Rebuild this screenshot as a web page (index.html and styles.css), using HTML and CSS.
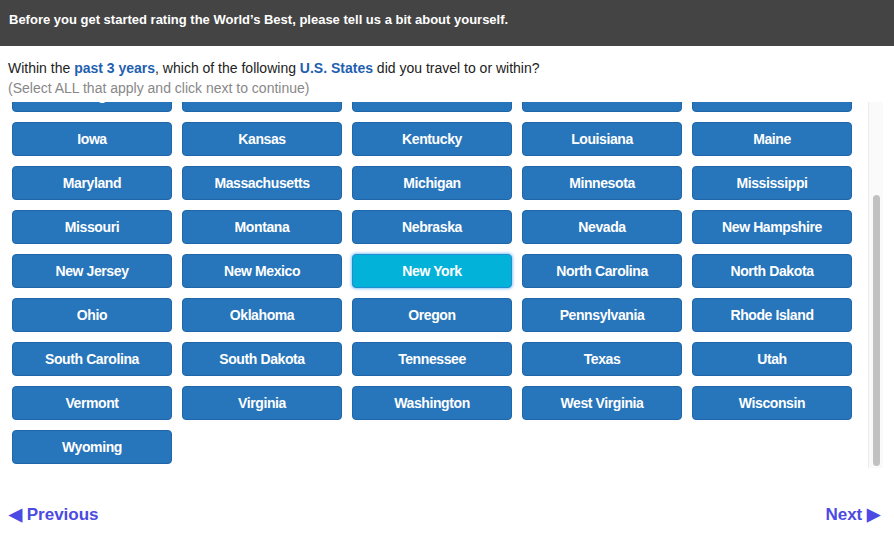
FILE: index.html
```html
<!DOCTYPE html>
<html lang="en">
<head>
    <meta charset="UTF-8">
    <meta name="viewport" content="width=device-width, initial-scale=1.0">
    <title>World's Best Survey</title>
    <link rel="stylesheet" href="styles.css">
</head>
<body>
    <div class="intro-bar">Before you get started rating the World’s Best, please tell us a bit about yourself.</div>

    <div class="question">
        <p class="question-text">Within the <b>past 3 years</b>, which of the following <b>U.S. States</b> did you travel to or within?</p>
        <p class="question-hint">(Select ALL that apply and click next to continue)</p>
    </div>

    <div class="choices-wrap">
        <div class="choices" id="choices">
            <div class="choice-grid">
                <button class="choice">Alabama</button>
                <button class="choice">Alaska</button>
                <button class="choice">Arizona</button>
                <button class="choice">Arkansas</button>
                <button class="choice">California</button>
                <button class="choice">Colorado</button>
                <button class="choice">Connecticut</button>
                <button class="choice">Delaware</button>
                <button class="choice">District of Columbia</button>
                <button class="choice">Florida</button>
                <button class="choice">Georgia</button>
                <button class="choice">Hawaii</button>
                <button class="choice">Idaho</button>
                <button class="choice">Illinois</button>
                <button class="choice">Indiana</button>
                <button class="choice">Iowa</button>
                <button class="choice">Kansas</button>
                <button class="choice">Kentucky</button>
                <button class="choice">Louisiana</button>
                <button class="choice">Maine</button>
                <button class="choice">Maryland</button>
                <button class="choice">Massachusetts</button>
                <button class="choice">Michigan</button>
                <button class="choice">Minnesota</button>
                <button class="choice">Mississippi</button>
                <button class="choice">Missouri</button>
                <button class="choice">Montana</button>
                <button class="choice">Nebraska</button>
                <button class="choice">Nevada</button>
                <button class="choice">New Hampshire</button>
                <button class="choice">New Jersey</button>
                <button class="choice">New Mexico</button>
                <button class="choice selected">New York</button>
                <button class="choice">North Carolina</button>
                <button class="choice">North Dakota</button>
                <button class="choice">Ohio</button>
                <button class="choice">Oklahoma</button>
                <button class="choice">Oregon</button>
                <button class="choice">Pennsylvania</button>
                <button class="choice">Rhode Island</button>
                <button class="choice">South Carolina</button>
                <button class="choice">South Dakota</button>
                <button class="choice">Tennessee</button>
                <button class="choice">Texas</button>
                <button class="choice">Utah</button>
                <button class="choice">Vermont</button>
                <button class="choice">Virginia</button>
                <button class="choice">Washington</button>
                <button class="choice">West Virginia</button>
                <button class="choice">Wisconsin</button>
                <button class="choice">Wyoming</button>
            </div>
        </div>
        <div class="scroll-track">
            <div class="scroll-thumb"></div>
        </div>
    </div>

    <div class="nav">
        <a href="#" class="nav-link">&#9664; Previous</a>
        <a href="#" class="nav-link">Next &#9654;</a>
    </div>

    <script>
        var choices = document.getElementById("choices");
        choices.scrollTop = choices.scrollHeight;
    </script>
</body>
</html>
```

FILE: styles.css
```css
body {
    font-family: "Liberation Sans", Arial, sans-serif;
    margin: 0;
    background-color: #fff;
    color: #222;
}

.intro-bar {
    background-color: #444;
    color: #fff;
    font-size: 13px;
    font-weight: bold;
    height: 46px;
    line-height: 40px;
    padding: 0 9px;
}

.question {
    padding: 12px 8px 0;
    font-size: 14px;
}

.question p {
    margin: 0;
    line-height: 20px;
}

.question-text b {
    color: #1f5fb0;
}

.question-hint {
    color: #888;
}

.choices-wrap {
    display: flex;
    height: 366px;
    margin: 4px 11px 0 0;
}

.choices {
    flex: 1;
    overflow: hidden;
}

.scroll-track {
    width: 14px;
    background-color: #fafafa;
    border-left: 1px solid #ececec;
}

.scroll-thumb {
    height: 271px;
    margin: 93px 3px 0 4px;
    background-color: #c1c1c1;
    border-radius: 4px;
}

.choice-grid {
    display: grid;
    grid-template-columns: repeat(5, 160px);
    gap: 10px;
    padding: 10px 0 4px 12px;
}

.choice {
    height: 34px;
    background-color: #2775bb;
    border: 1px solid #1f66a8;
    border-radius: 4px;
    color: #fff;
    font-family: "Liberation Sans", Arial, sans-serif;
    font-size: 14px;
    font-weight: bold;
    letter-spacing: -0.4px;
    padding: 0;
    cursor: pointer;
}

.choice.selected {
    background-color: #02b2d8;
    border-color: #1d8fd0;
    box-shadow: 0 0 3px 1px #8cc8f7;
}

.nav {
    display: flex;
    justify-content: space-between;
    padding: 36px 14px 0 9px;
}

.nav-link {
    color: #4b4be3;
    font-size: 17px;
    font-weight: bold;
    text-decoration: none;
}
```
